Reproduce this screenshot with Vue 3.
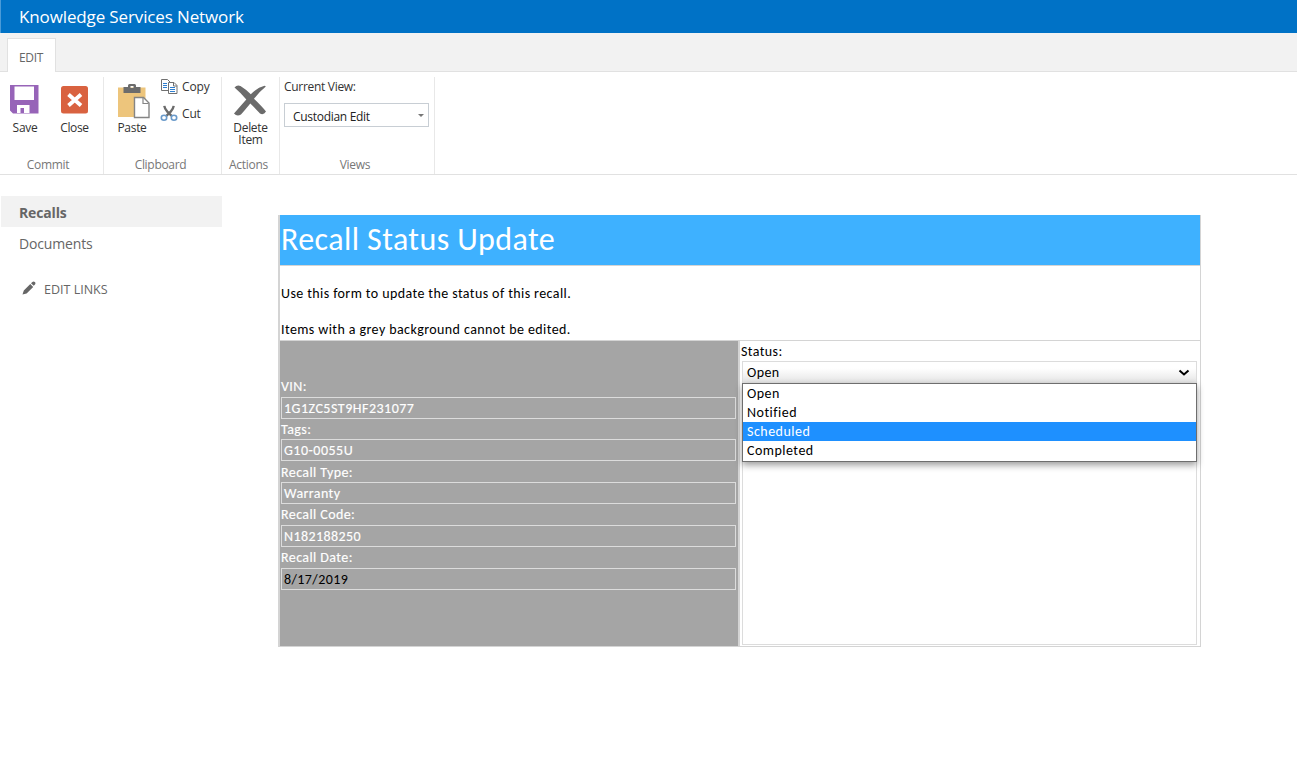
<script setup>
const fields = [
  { label: 'VIN:', value: '1G1ZC5ST9HF231077', key: 'vin' },
  { label: 'Tags:', value: 'G10-0055U', key: 'tags' },
  { label: 'Recall Type:', value: 'Warranty', key: 'type' },
  { label: 'Recall Code:', value: 'N182188250', key: 'code' },
  { label: 'Recall Date:', value: '8/17/2019', key: 'date' },
]
const options = ['Open', 'Notified', 'Scheduled', 'Completed']
</script>

<template>
  <div class="page">
    <header class="suite"><span class="brand">Knowledge Services Network</span></header>
    <nav class="tabs"><div class="tab"><span>EDIT</span></div></nav>

    <section class="ribbon">
      <div class="group commit">
        <div class="body">
          <div class="big save">
            <svg width="30" height="30" viewBox="0 0 30 30">
              <path fill="#9764b8" fill-rule="evenodd" d="M1 1h28.500v28.500H4l-3-3zM5.500 2.500h19.500V16H5.500zM8 21v8h3.500v-5h3.500v5h5.500v-8z" />
            </svg>
            <span>Save</span>
          </div>
          <div class="big close">
            <svg width="30" height="30" viewBox="0 0 30 30">
              <rect x="1" y="2" width="27" height="27.500" rx="2.500" fill="#d96240" />
              <path d="M8.500 10.500l12.500 11M21 10.500l-12.500 11" stroke="#fff" stroke-width="3.800" />
            </svg>
            <span>Close</span>
          </div>
        </div>
        <div class="caption"><span>Commit</span></div>
      </div>

      <div class="group clipboard">
        <div class="body">
          <div class="big paste">
            <svg width="34" height="36" viewBox="0 0 34 36">
              <rect x="1" y="4.500" width="27.500" height="29.500" fill="#edc57c" />
              <path fill="#6c6c6c" d="M6.500 4h4.500V2.500q0-1.500 1.500-1.500h5q1.500 0 1.500 1.500V4h4.500v6h-17zM13.500 3v2h3V3z" fill-rule="evenodd" />
              <path d="M17.500 14.500h9l5.500 5.500v14.500H17.500z" fill="#fff" stroke="#858585" stroke-width="1.400" />
              <path d="M26 15v5.500h5.500" fill="none" stroke="#858585" stroke-width="1.200" />
            </svg>
            <span>Paste</span>
          </div>
          <div class="smalls">
            <div class="small copy">
              <svg width="18" height="17" viewBox="0 0 18 17">
                <g fill="#fff" stroke="#707070">
                  <path d="M1.500 1.500h6l2.500 2.500v8.500H1.500z" />
                  <path d="M8.500 4.500h5.500l3 3v8H8.500z" />
                  <path d="M13.500 4.500v3.500h3.500" fill="none" />
                </g>
                <path d="M3 5.500h4M3 7.500h4M3 9.500h4M10 9.500h5M10 11.500h5M10 13.500h5" stroke="#2f7fd0" stroke-width="1.200" />
              </svg>
              <span>Copy</span>
            </div>
            <div class="small cut">
              <svg width="18" height="17" viewBox="0 0 18 18" preserveAspectRatio="none">
                <path d="M4.300 1q.5 3.500 3 6l4.700 5M13.700 1q-.5 3.500-3 6l-4.700 5" fill="none" stroke="#6b6b6b" stroke-width="2.400" />
                <circle cx="4" cy="13.500" r="2.700" fill="#fff" stroke="#6a9aca" stroke-width="1.600" />
                <circle cx="14" cy="13.500" r="2.700" fill="#fff" stroke="#6a9aca" stroke-width="1.600" />
              </svg>
              <span>Cut</span>
            </div>
          </div>
        </div>
        <div class="caption"><span>Clipboard</span></div>
      </div>

      <div class="group actions">
        <div class="body">
          <div class="big delete">
            <svg width="34" height="32" viewBox="0 0 34 32">
              <path fill="#6b6b6b" d="M1.500 3.500Q4 .5 7.500 2q5 3 10.300 8.300Q24 3.500 31.500 1.800q2 0 .8 1.200Q26 8 21 14.800 28.500 22 33 27.500q-2.500 4-6 2Q22.500 24.500 17.300 19.500 12 26 8 30.500 4 33 1 29.500 7.500 22 13.300 15.500 8 9 1.500 3.500z" />
            </svg>
            <span>Delete<br />Item</span>
          </div>
        </div>
        <div class="caption"><span>Actions</span></div>
      </div>

      <div class="group views">
        <div class="body view-body">
          <span class="current">Current View:</span>
          <div class="view-select"><span>Custodian Edit</span><i></i></div>
        </div>
        <div class="caption"><span>Views</span></div>
      </div>
    </section>

    <main class="workspace">
      <aside class="side">
        <div class="link active"><span>Recalls</span></div>
        <div class="link"><span>Documents</span></div>
        <div class="edit-links">
          <svg width="14" height="14" viewBox="0 0 14 14">
            <path fill="#666" d="M.5 13.500l1.300-4L8.300 3l2.900 2.900-6.600 6.500zM9 2.300l1.400-1.400q1.200-1 2.400.1t.2 2.400l-1.300 1.400z" />
          </svg>
          <span>EDIT LINKS</span>
        </div>
      </aside>

      <section class="form">
        <h1 class="title"><span>Recall Status Update</span></h1>
        <div class="intro">
          <p><span>Use this form to update the status of this recall.</span></p>
          <p><span>Items with a grey background cannot be edited.</span></p>
        </div>
        <div class="columns">
          <div class="locked">
            <div v-for="f in fields" :key="f.key" class="field" :class="f.key">
              <div class="label"><span>{{ f.label }}</span></div>
              <div class="box"><span>{{ f.value }}</span></div>
            </div>
          </div>
          <div class="status">
            <div class="status-label"><span>Status:</span></div>
            <div class="picker">
              <div class="select">
                <span>Open</span>
                <svg width="12" height="8" viewBox="0 0 12 8"><path d="M1.500 1.500L6 5.500l4.500-4" fill="none" stroke="#000" stroke-width="2" /></svg>
              </div>
              <ul class="menu">
                <li v-for="o in options" :key="o" :class="{ chosen: o === 'Scheduled' }"><span>{{ o }}</span></li>
              </ul>
            </div>
            <div class="notes"></div>
          </div>
        </div>
      </section>
    </main>
  </div>
</template>

<style scoped>
* { box-sizing: border-box; }
.page { width: 1297px; height: 758px; overflow: hidden; background: #fff; font-family: "Open Sans", "Noto Sans", sans-serif; color: #333; font-size: 12px; white-space: nowrap; }
svg { display: block; flex: none; }
.suite { height: 33px; background: #0072c6; border-left: 1px solid #4a9bd8; padding-left: 18px; color: #fff; font-size: 17px; line-height: 33px; letter-spacing: -0.13px; }
.tabs { height: 39px; background: #f2f2f2; border-bottom: 1px solid #e1e1e1; padding: 5px 0 0 7px; }
.tab { width: 49px; height: 34px; background: #fff; border: 1px solid #e1e1e1; border-bottom: 0; padding-left: 11px; line-height: 38px; color: #666; letter-spacing: -0.3px; }
.ribbon { height: 103px; border-bottom: 1px solid #e1e1e1; display: flex; padding-top: 5px; }
.group { height: 97px; border-right: 1px solid #e8e8e8; display: flex; flex-direction: column; letter-spacing: -0.3px; }
.body { height: 80px; display: flex; }
.caption { line-height: 16px; color: #777; text-align: center; }
.commit { width: 104px; }
.commit .caption { padding-right: 7px; }
.clipboard { width: 118px; }
.clipboard .caption { padding-right: 4px; }
.actions { width: 58px; }
.actions .caption { padding-right: 4px; }
.views { width: 155px; }
.views .caption { padding-right: 4px; }
.big { width: 50px; height: 76px; display: flex; flex-direction: column; align-items: center; padding-top: 7px; }
.big span { line-height: 12px; text-align: center; }
.save svg, .close svg { margin-bottom: 8px; }
.save svg { margin-left: -2px; }
.close span { letter-spacing: -0.35px; margin-left: -1px; }
.paste { width: 56px; }
.paste svg { margin: -1px 0 3px 4px; }
.smalls { display: flex; flex-direction: column; gap: 10px; padding-top: 1px; }
.small { display: flex; align-items: center; height: 17px; gap: 4px; }
.small span { letter-spacing: -0.15px; }
.delete { width: 57px; }
.delete svg { margin: 0 1px 6px 0; }
.view-body { flex-direction: column; padding-left: 4px; }
.current { line-height: 20px; }
.view-select { margin-top: 6px; width: 145px; height: 24px; border: 1px solid #c8ced4; display: flex; align-items: center; justify-content: space-between; padding: 2px 4px 0 8px; color: #222; }
.view-select i { border: 3px solid transparent; border-top-color: #777; border-bottom: 0; margin-bottom: 2px; }
.workspace { display: flex; align-items: flex-start; }
.side { width: 278px; padding-top: 21px; color: #666; font-size: 14px; }
.link { height: 31px; width: 221px; margin-left: 1px; padding-left: 18px; line-height: 33px; letter-spacing: -0.15px; }
.active { background: #f2f2f2; font-weight: 700; }
.edit-links { display: flex; align-items: center; gap: 8px; margin: 20px 0 0 22px; font-size: 12.500px; height: 22px; }
.edit-links svg { margin-top: -3px; }
.form { width: 923px; margin-top: 40px; border: 1px solid #d4d4d4; border-top: 0; border-left-width: 2px; font-family: Carlito, Lato, sans-serif; font-size: 14px; letter-spacing: 0.41px; color: #000; }
.title { margin: 0; height: 50px; background: #3eb1ff; color: #fff; font-size: 32px; font-weight: 400; line-height: 50px; padding-left: 1px; letter-spacing: 0.4px; }
.intro { height: 76px; border-top: 1px solid #d4d4d4; border-bottom: 1px solid #d4d4d4; padding: 19px 0 0 1px; }
.intro p { margin: 0 0 18px; line-height: 18px; }
.columns { display: flex; height: 305px; }
.locked { width: 460px; background: #a5a5a5; border-right: 2px solid #d4d4d4; padding: 36px 0 0 1px; color: #fff; }
.field { height: 42.750px; width: 455px; }
.label { height: 19.600px; line-height: 20px; }
.box { height: 22px; border: 1px solid #dcdcdc; line-height: 21px; padding-left: 2px; }
.vin .box { letter-spacing: 0.5px; }
.tags .box { letter-spacing: 0.5px; }
.vin, .tags, .type, .code, .date .label { -webkit-text-stroke: 0.15px #fff; }
.date .box { color: #000; }
.status { flex: 1; padding: 1px 3px 1px 1px; display: flex; flex-direction: column; }
.status-label { height: 19px; line-height: 20px; }
.picker { position: relative; height: 22px; margin-left: 1px; }
.select { height: 22px; border: 1px solid #dcdcdc; border-bottom: 0; padding: 0 6px 0 4px; display: flex; align-items: center; justify-content: space-between; background: linear-gradient(#fff 30%, #e4e4e4); }
.menu { position: absolute; z-index: 2; left: 0; right: 0; top: 22px; height: 79px; margin: 0; padding: 0; list-style: none; background: #fff; border: 1px solid #6e6e6e; box-shadow: 0 3px 7px rgba(0, 0, 0, 0.4); }
.menu li { height: 19px; line-height: 20px; padding-left: 4px; letter-spacing: 0.48px; }
.menu .chosen { background: #1e90ff; color: #fff; }
.notes { flex: 1; margin-left: 1px; border: 1px solid #dcdcdc; border-top: 0; }
</style>
